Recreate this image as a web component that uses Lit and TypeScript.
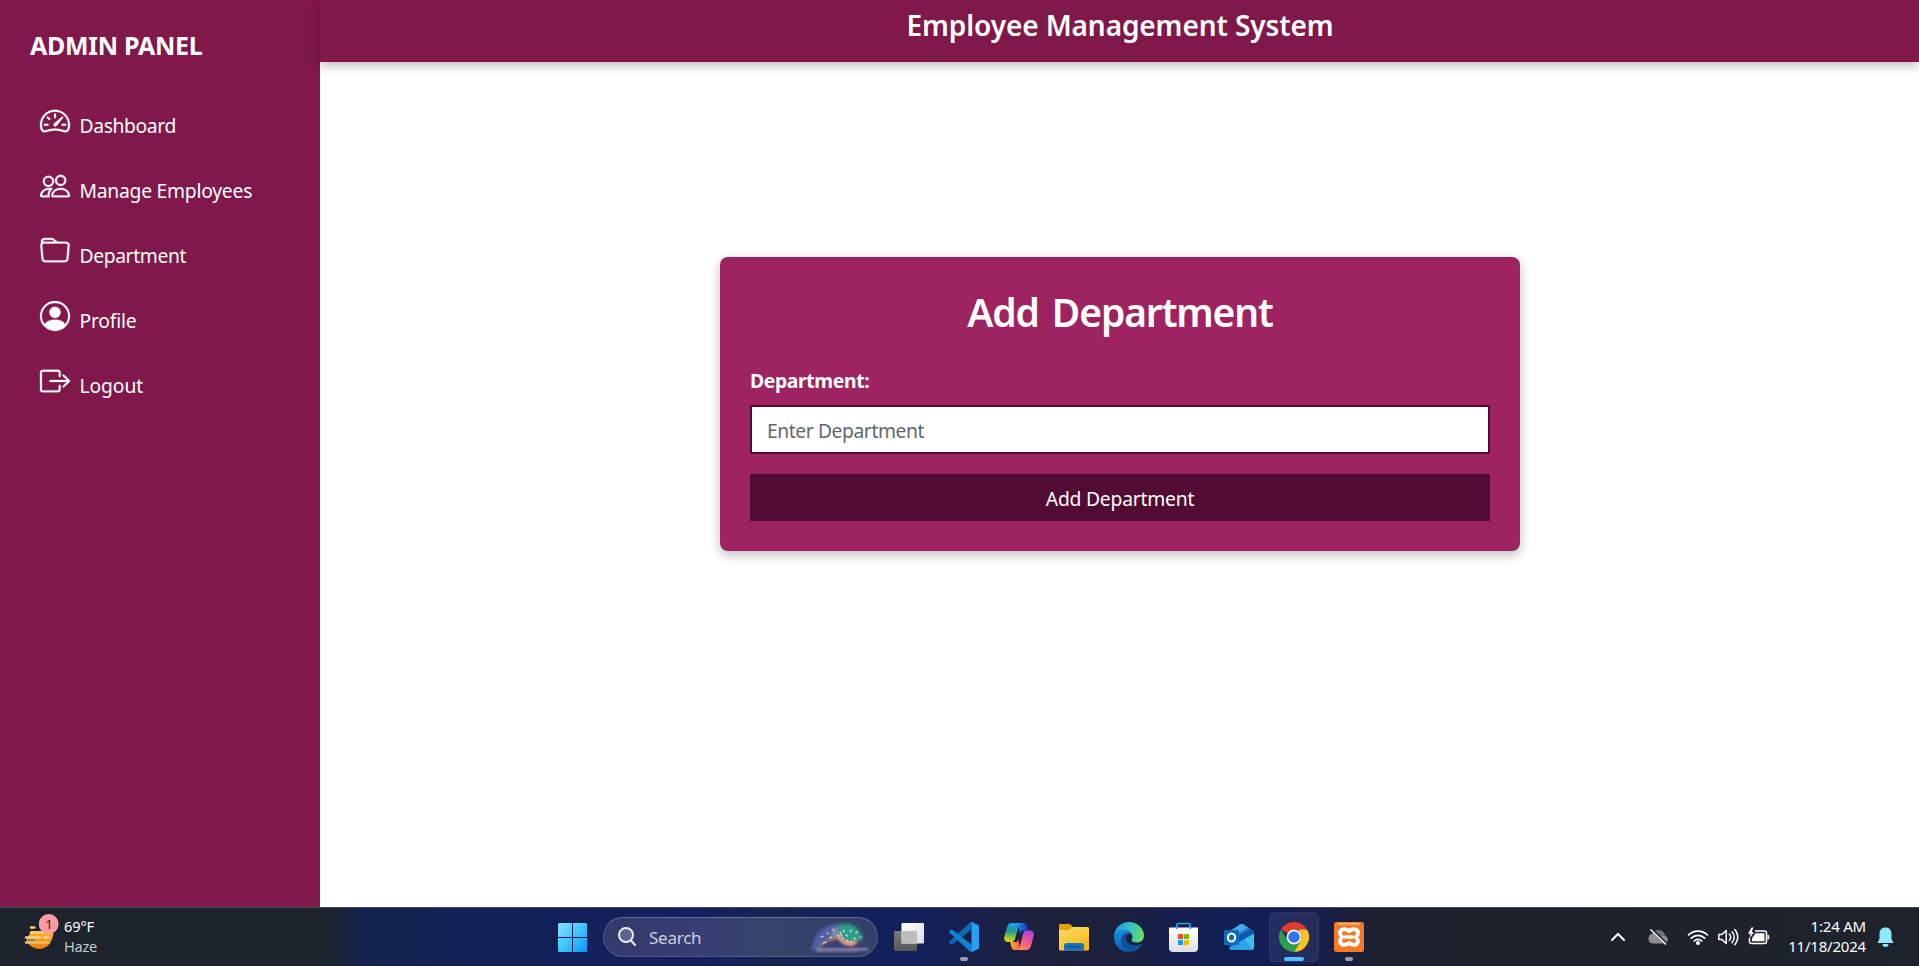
import { LitElement, html, svg, css } from "lit";
import { customElement } from "lit/decorators.js";

interface NavItem {
  label: string;
  tracking: number;
  paths: string[];
}

const NAV: NavItem[] = [
  {
    label: "Dashboard",
    tracking: -0.38,
    paths: [
      "M8 4a.5.5 0 0 1 .5.5V6a.5.5 0 0 1-1 0V4.5A.5.5 0 0 1 8 4M3.732 5.732a.5.5 0 0 1 .707 0l.915.914a.5.5 0 1 1-.708.708l-.914-.915a.5.5 0 0 1 0-.707M2 10a.5.5 0 0 1 .5-.5h1.586a.5.5 0 0 1 0 1H2.5A.5.5 0 0 1 2 10m9.5 0a.5.5 0 0 1 .5-.5h1.5a.5.5 0 0 1 0 1H12a.5.5 0 0 1-.5-.5m.754-4.246a.39.39 0 0 0-.527-.02L7.547 9.31a.91.91 0 1 0 1.302 1.258l3.434-4.297a.39.39 0 0 0-.029-.518z",
      "M0 10a8 8 0 1 1 15.547 2.661c-.442 1.253-1.845 1.602-2.932 1.25C11.309 13.488 9.475 13 8 13c-1.474 0-3.31.488-4.615.911-1.087.352-2.49.003-2.932-1.25A8 8 0 0 1 0 10m8-7a7 7 0 0 0-6.603 9.329c.203.575.923.876 1.68.63C4.397 12.533 6.358 12 8 12s3.604.532 4.923.96c.757.245 1.477-.056 1.68-.631A7 7 0 0 0 8 3",
    ],
  },
  {
    label: "Manage Employees",
    tracking: -0.24,
    paths: [
      "M15 14s1 0 1-1-1-4-5-4-5 3-5 4 1 1 1 1zm-7.978-1L7 12.996c.001-.264.167-1.03.76-1.72C8.312 10.629 9.282 10 11 10c1.717 0 2.687.63 3.24 1.276.593.69.758 1.457.76 1.72l-.008.002-.014.002zM11 7a2 2 0 1 0 0-4 2 2 0 0 0 0 4m3-2a3 3 0 1 1-6 0 3 3 0 0 1 6 0M6.936 9.28a6 6 0 0 0-1.23-.247A7 7 0 0 0 5 9c-4 0-5 3-5 4q0 1 1 1h4.216A2.24 2.24 0 0 1 5 13c0-1.01.377-2.042 1.09-2.904.243-.294.526-.569.846-.816M4.92 10A5.5 5.5 0 0 0 4 13H1c0-.26.164-1.03.76-1.724.545-.636 1.492-1.256 3.16-1.275ZM1.5 5.5a3 3 0 1 1 6 0 3 3 0 0 1-6 0m3-2a2 2 0 1 0 0 4 2 2 0 0 0 0-4",
    ],
  },
  {
    label: "Department",
    tracking: -0.38,
    paths: [
      "M.54 3.87.5 3a2 2 0 0 1 2-2h3.672a2 2 0 0 1 1.414.586l.828.828A2 2 0 0 0 9.828 3h3.982a2 2 0 0 1 1.992 2.181l-.637 7A2 2 0 0 1 13.174 14H2.826a2 2 0 0 1-1.991-1.819l-.637-7a2 2 0 0 1 .342-1.31zM2.19 4a1 1 0 0 0-.996 1.09l.637 7a1 1 0 0 0 .995.91h10.348a1 1 0 0 0 .995-.91l.637-7A1 1 0 0 0 13.81 4zm4.69-1.707A1 1 0 0 0 6.172 2H2.5a1 1 0 0 0-1 .981l.006.139q.323-.119.684-.12h5.396z",
    ],
  },
  {
    label: "Profile",
    tracking: -0.2,
    paths: [
      "M11 6a3 3 0 1 1-6 0 3 3 0 0 1 6 0",
      "M0 8a8 8 0 1 1 16 0A8 8 0 0 1 0 8m8-7a7 7 0 0 0-5.468 11.37C3.242 11.226 4.805 10 8 10s4.757 1.225 5.468 2.37A7 7 0 0 0 8 1",
    ],
  },
  {
    label: "Logout",
    tracking: -0.1,
    paths: [
      "M10 12.5a.5.5 0 0 1-.5.5h-8a.5.5 0 0 1-.5-.5v-9a.5.5 0 0 1 .5-.5h8a.5.5 0 0 1 .5.5v2a.5.5 0 0 0 1 0v-2A1.5 1.5 0 0 0 9.5 2h-8A1.5 1.5 0 0 0 0 3.5v9A1.5 1.5 0 0 0 1.5 14h8a1.5 1.5 0 0 0 1.5-1.5v-2a.5.5 0 0 0-1 0z",
      "M15.854 8.354a.5.5 0 0 0 0-.708l-3-3a.5.5 0 0 0-.708.708L14.293 7.5H5.5a.5.5 0 0 0 0 1h8.793l-2.147 2.146a.5.5 0 0 0 .708.708z",
    ],
  },
];

@customElement("side-bar")
class SideBar extends LitElement {
  static styles = css`
    :host {
      display: block;
      width: 320px;
      background: #80184a;
      color: #fff;
      box-sizing: border-box;
      padding: 29px 30px 0;
    }
    .brand {
      margin: 0 0 44px;
      font-size: 25px;
      line-height: 33px;
      font-weight: 700;
      letter-spacing: -0.3px;
      white-space: nowrap;
    }
    .menu {
      list-style: none;
      margin: 0;
      padding: 0 10px;
    }
    .item {
      display: flex;
      height: 65px;
      gap: 9.5px;
      font-size: 19.3px;
      line-height: 24px;
    }
    .item svg {
      width: 30px;
      height: 30px;
      flex: none;
      overflow: visible;
      fill: currentColor;
      stroke: currentColor;
      stroke-width: 0.15;
    }
    .label {
      padding-top: 8px;
      white-space: nowrap;
    }
  `;
  render() {
    return html`
      <h2 class="brand">ADMIN PANEL</h2>
      <ul class="menu">
        ${NAV.map(
          (n) => html`<li class="item">
            <svg viewBox="0 0 16 16" fill-rule="evenodd">${n.paths.map((d) => svg`<path d=${d} />`)}</svg>
            <span class="label" style="letter-spacing:${n.tracking}px">${n.label}</span>
          </li>`
        )}
      </ul>
    `;
  }
}

@customElement("department-form")
class DepartmentForm extends LitElement {
  static styles = css`
    :host {
      display: block;
      box-sizing: border-box;
      width: 800px;
      height: 294px;
      padding: 30px;
      border-radius: 8px;
      background: #9d2461;
      color: #fff;
      box-shadow: 0 4px 12px rgba(0, 0, 0, 0.25);
    }
    form {
      display: flex;
      flex-direction: column;
    }
    .title {
      margin: 1px 0 33px;
      text-align: center;
      font-size: 39px;
      line-height: 48px;
      font-weight: 600;
      letter-spacing: -1.15px;
      word-spacing: 4px;
    }
    .caption {
      font-size: 19.3px;
      line-height: 24px;
      font-weight: 700;
      letter-spacing: -0.34px;
      margin-bottom: 12px;
    }
    .field {
      box-sizing: border-box;
      height: 49px;
      margin: 0 0 20px;
      padding: 2px 14px 0 15px;
      border: 2px solid #520b32;
      border-radius: 0;
      background: #fff;
      font: inherit;
      font-size: 19.3px;
      letter-spacing: -0.42px;
      outline: none;
    }
    .field::placeholder {
      color: #62666b;
      opacity: 1;
    }
    .submit {
      height: 47px;
      padding: 2px 0 0;
      border: 0;
      background: #520b32;
      color: #fff;
      font: inherit;
      font-size: 19.3px;
      letter-spacing: -0.22px;
    }
  `;
  render() {
    return html`<form>
      <h1 class="title">Add Department</h1>
      <label class="caption" for="dep">Department:</label>
      <input class="field" id="dep" placeholder="Enter Department" />
      <button class="submit" type="button">Add Department</button>
    </form>`;
  }
}

const taskView = svg`<svg viewBox="0 0 30 30">
  <defs><linearGradient id="tv" x2="1" y2="1"><stop stop-color="#fff"/><stop offset="1" stop-color="#dcdcdf"/></linearGradient>
  <linearGradient id="tg" x2="0" y2="1"><stop stop-color="#7b7b7d"/><stop offset="1" stop-color="#585858"/></linearGradient></defs>
  <rect x="0" y="9" width="23" height="20" rx="1" fill="url(#tg)"/>
  <rect x="7.500" y="1" width="22.500" height="20.500" rx="1" fill="url(#tv)"/>
  <rect x="7.500" y="9" width="15.500" height="12.500" fill="#bdbdbf"/></svg>`;

const vscode = svg`<svg viewBox="0 0 30 30">
  <path d="M22.500 7.500 3.300 22.300a1.300 1.300 0 0 1-1.600 0L.5 21a1.300 1.300 0 0 1 0-1.800L20.800.800a3.700 3.700 0 0 1 1.700-.5z" fill="#0a6cb4"/>
  <path d="M22.500 22.500 3.300 7.700a1.300 1.300 0 0 0-1.600 0L.5 9a1.300 1.300 0 0 0 0 1.800L20.800 29.200a3.700 3.700 0 0 0 1.700.5z" fill="#0c83d0"/>
  <path d="M22 .2c.5-.2 1-.1 1.400.1l5.500 2.600c.7.300 1.100 1 1.100 1.700v20.800c0 .7-.4 1.400-1.100 1.700l-5.500 2.600c-.7.300-1.700.2-2.400-.5.900.4 1.500-.2 1.500-1.300V2.100C22.500.9 21.800.4 21 .8z" fill="#2a9ff0"/></svg>`;

const copilot = svg`<svg viewBox="0 0 30 30">
  <defs>
    <linearGradient id="c1" x1=".5" x2=".4" y2="1"><stop stop-color="#1f9cf0"/><stop offset=".45" stop-color="#1b9e93"/><stop offset=".75" stop-color="#8cc63a"/><stop offset="1" stop-color="#f5c60b"/></linearGradient>
    <linearGradient id="c2" x1=".7" x2=".2" y2="1"><stop stop-color="#a545e8"/><stop offset=".5" stop-color="#f0568b"/><stop offset="1" stop-color="#ff9350"/></linearGradient>
    <linearGradient id="c3" x2="1"><stop stop-color="#1a7fe0"/><stop offset="1" stop-color="#1639c8"/></linearGradient>
    <linearGradient id="c4" x2="1"><stop stop-color="#ffb02e"/><stop offset="1" stop-color="#ff5a4a"/></linearGradient>
  </defs>
  <path d="M14 1h5.500c2 0 3 1.200 3.500 3l1.200 4.500h-4.500c-2 0-3 1-3.500 3z" fill="url(#c3)"/>
  <path d="M16 28h-5c-2 0-3-1.200-3.500-3L6.200 20h5c2 0 2.800-1 3.300-3z" fill="url(#c4)"/>
  <path d="M7.500 1H18c-2 0-2.800 1.500-3.400 3.500L11 17c-.7 2.200-1.800 3-4 3H4c-3 0-4.500-2-3.700-5.500L3.300 4.500C4 2.200 5.300 1 7.500 1z" fill="url(#c1)"/>
  <path d="M22.500 28H12.500c2 0 2.800-1.500 3.400-3.500L19 12c.7-2.500 1.800-3.500 4-3.500h3c3 0 4.500 2 3.700 5.500l-3 10.500c-.7 2.300-2 3.500-4.200 3.500z" fill="url(#c2)"/></svg>`;

const explorer = svg`<svg viewBox="0 0 30 30">
  <defs><linearGradient id="fe" x2=".7" y2="1"><stop stop-color="#ffdc6e"/><stop offset="1" stop-color="#fdb913"/></linearGradient></defs>
  <path d="M0 3.500C0 2.500.6 2 1.500 2h8.500c.8 0 1.300.2 1.800.8L14 5v5H0z" fill="#e3a008"/>
  <path d="M0 8h9.500c1 0 1.500-.3 2-.8l1.300-1.400c.5-.5 1-.8 1.700-.8H28.500c1 0 1.500.6 1.500 1.500V27c0 1-.5 1.500-1.500 1.500H1.500C.5 28.500 0 28 0 27z" fill="url(#fe)"/>
  <path d="M5 28.500V23.500c0-1.600 1-2.500 2.500-2.500h15c1.500 0 2.500.9 2.500 2.500v5z" fill="#1573c4"/>
  <rect x="8" y="24" width="14" height="1.200" rx=".6" fill="#0d4f8f"/></svg>`;

const edge = svg`<svg viewBox="0 0 30 30">
  <defs>
    <linearGradient id="e1" x1="0" y1=".4" x2="1" y2=".6"><stop stop-color="#1b9de2"/><stop offset=".5" stop-color="#32c2c4"/><stop offset="1" stop-color="#69e05a"/></linearGradient>
    <linearGradient id="e2" x2=".3" y2="1"><stop stop-color="#1c8fdc"/><stop offset="1" stop-color="#0b62b8"/></linearGradient>
  </defs>
  <path d="M15 0c8.500 0 15 6.500 15 13.500 0 4.500-3.200 7-7 7-3 0-5.500-1-5.500-2.400 0-.8 1-1.400 1-3.400C18.500 11.500 15 8 10.500 8 5 8 1 11 0 15 0 6.500 6.500 0 15 0z" fill="url(#e1)"/>
  <path d="M0 15C.5 10.500 5 7.500 10 7.700c4.500.2 8.500 3.500 8.500 7 0-2-2-3.500-4.500-3.500-4 0-6.500 3.500-6.500 7.300C7.500 24.500 12 29.500 18 29.700 17 30 16 30 15 30 6.500 30 0 23.500 0 15z" fill="url(#e2)"/>
  <path d="M14 11.200C10 11.200 7.500 14.500 7.500 18.500c0 6 5 11.500 11 11.200 4-.8 7.500-3.500 9.300-7 .3-.6-.2-1-.8-.7-1.500.8-3.500 1.200-5.500 1.200-5.500 0-9.500-3-9.500-6.800 0-2 1-4 2.800-5.100z" fill="#10529d"/></svg>`;

const store = svg`<svg viewBox="0 0 30 30">
  <defs><linearGradient id="st" x2="0" y2="1"><stop stop-color="#fff"/><stop offset="1" stop-color="#dedee2"/></linearGradient></defs>
  <path d="M7.800 6.500V3.200c0-1 .6-1.700 1.700-1.700h10c1.100 0 1.700.7 1.700 1.700v3.300" fill="none" stroke="#28a8ea" stroke-width="1.700"/>
  <path d="M0 5.500h29V26c0 2.500-1.500 4-4 4H4c-2.500 0-4-1.500-4-4z" fill="url(#st)"/>
  <path d="M7.800 5v2M21.200 5v2" stroke="#28a8ea" stroke-width="1.700"/>
  <path d="M9 12h5v5H9z" fill="#f04f23"/><path d="M15 12h5v5h-5z" fill="#7fb900"/>
  <path d="M9 18h5v5H9z" fill="#03a4ee"/><path d="M15 18h5v5h-5z" fill="#fdb800"/></svg>`;

const outlook = svg`<svg viewBox="0 0 30 30">
  <path d="M5 9.500 16.500 2.300c.8-.5 1.700-.5 2.500 0L30 9.500V14L10 25z" fill="#1e78cc"/>
  <path d="m5 9.500 11.500-7.200c.8-.5 1.700-.5 2.500 0l5 3.200L12 13H5z" fill="#45a9ee"/>
  <path d="m12 15 15-7.800 3 2.300v2.700L16 20.500z" fill="#0f55ab"/>
  <path d="M5 12h7v13H5z" fill="#1062b4"/>
  <path d="M30 11.500v14c0 1.700-1 2.500-2.500 2.500H8C6.500 28 5.500 27 5.500 26L14 21z" fill="#38c3ef"/>
  <path d="m15 21 6-3.500 8 10c-.4.300-1 .5-1.500.5H8C6.500 28 5.500 27 5.500 26z" fill="#2ba4e4"/>
  <rect x="0" y="8" width="15" height="15" rx="1.500" fill="#0f6cbd"/>
  <ellipse cx="7.500" cy="15.500" rx="3.600" ry="4" fill="none" stroke="#fff" stroke-width="2.100"/></svg>`;

const chrome = svg`<svg viewBox="0 0 30 30">
  <path d="M15 0A15 15 0 0 1 28 7.500H15a7.500 7.500 0 0 0-6.500 3.750L2 7.500A15 15 0 0 1 15 0z" fill="#e33b2e"/>
  <path d="M28 7.500A15 15 0 0 1 15 30l6.500-11.250A7.500 7.500 0 0 0 21.500 11.250L19 7.500z" fill="#fcc31e"/>
  <path d="M2 7.500A15 15 0 0 0 15 30l6.500-11.250a7.500 7.500 0 0 1-13 0z" fill="#2b9d4b"/>
  <circle cx="15" cy="15" r="7.500" fill="#fff"/><circle cx="15" cy="15" r="5.800" fill="#2f76e8"/></svg>`;

const xampp = svg`<svg viewBox="0 0 30 30">
  <rect width="30" height="30" rx="2.500" fill="#f37a22"/>
  <path d="M4 1.800h22" stroke="#fbb98a" stroke-width="1.500"/>
  <g fill="none" stroke="#fff" stroke-width="3.900" stroke-linejoin="round">
    <path d="M15 9.300C13.500 7.300 11.500 7.200 10 7.200 7.500 7.200 6 8.800 6 10.800c0 2 .8 3 2 4.200-1.200 1.200-2 2.200-2 4.200s1.500 3.600 4 3.600c1.500 0 3.500-.1 5-2.100 1.500 2 3.500 2.100 5 2.100 2.500 0 4-1.600 4-3.600s-.8-3-2-4.200c1.200-1.200 2-2.200 2-4.200s-1.500-3.600-4-3.600c-1.500 0-3.500.1-5 2.100z"/>
    <path d="M11.500 15h7" stroke-width="3.600" stroke-linecap="round"/>
  </g></svg>`;

const PINNED = [
  { icon: taskView, mark: "" },
  { icon: vscode, mark: "dot" },
  { icon: copilot, mark: "" },
  { icon: explorer, mark: "" },
  { icon: edge, mark: "" },
  { icon: store, mark: "" },
  { icon: outlook, mark: "" },
  { icon: chrome, mark: "bar" },
  { icon: xampp, mark: "dot" },
];

@customElement("task-bar")
class TaskBar extends LitElement {
  static styles = css`
    :host {
      display: grid;
      grid-template-columns: 558px 29px 291px auto 1fr;
      box-sizing: border-box;
      height: 59px;
      border-top: 1px solid #454a52;
      border-bottom: 1px solid #161a26;
      color: #fff;
      background: linear-gradient(
        90deg,
        #1d232c 0,
        #1d232c 318px,
        #192433 335px,
        #142450 365px,
        #12205a 560px,
        #14205b 640px,
        #151e60 690px,
        #14235a 725px,
        #152552 780px,
        #11205a 860px,
        #13205c 925px,
        #1a2048 985px,
        #1c203a 1050px,
        #1b203e 1120px,
        #141f50 1180px,
        #131e57 1290px,
        #191f40 1340px,
        #1c212d 1385px,
        #1d222c 100%
      );
    }
    .weather {
      display: flex;
      padding: 8px 0 0 24px;
      gap: 5px;
      font-size: 14.6px;
      line-height: 20px;
    }
    .weather svg {
      width: 35px;
      height: 36px;
      margin-top: -2px;
      flex: none;
    }
    .temp {
      letter-spacing: -0.15px;
    }
    .sky {
      color: #c6c9cd;
      letter-spacing: -0.3px;
    }
    .badge {
      font-size: 13px;
    }
    .start {
      width: 29px;
      height: 29px;
      margin-top: 15px;
    }
    .search {
      box-sizing: border-box;
      display: flex;
      align-items: center;
      width: 275px;
      height: 40px;
      margin: 9px 0 0 16px;
      padding: 0 4px 0 13px;
      border: 1px solid rgba(255, 255, 255, 0.15);
      border-top-color: rgba(255, 255, 255, 0.24);
      border-radius: 20px;
      background: linear-gradient(90deg, #333a6c, #383d72 35%, #35436a 60%, #33416a);
      color: #cbcedf;
      font-size: 17px;
      line-height: 24px;
    }
    .search .lens {
      width: 20px;
      height: 20px;
      margin-right: 12px;
    }
    .search .query {
      flex: 1;
      padding-top: 1px;
      letter-spacing: -0.25px;
    }
    .search .art {
      width: 62px;
      height: 32px;
    }
    .pins {
      display: flex;
      margin-left: 3px;
    }
    .pin {
      box-sizing: border-box;
      position: relative;
      width: 50px;
      height: 50px;
      margin: 4px 2.5px 0;
      padding: 9px 9px 0;
      border: 1px solid transparent;
      border-radius: 6px;
    }
    .pin.bar {
      background: rgba(255, 255, 255, 0.07);
      border-color: rgba(255, 255, 255, 0.05);
    }
    .pin svg {
      display: block;
      width: 30px;
      height: 30px;
    }
    .pin.dot::after,
    .pin.bar::after {
      content: "";
      position: absolute;
      bottom: 0;
      left: 20px;
      width: 8px;
      height: 4px;
      border-radius: 2px;
      background: #9b9db0;
    }
    .pin.bar::after {
      left: 14px;
      width: 20px;
      background: #4cc2ff;
    }
    .tray {
      display: flex;
      justify-content: flex-end;
      padding-right: 25px;
    }
    .tray svg {
      flex: none;
      height: 22px;
      margin-top: 18px;
    }
    .tray .cloud {
      margin-right: 5px;
    }
    .clock {
      width: 88px;
      margin: 8px 11px 0 5px;
      text-align: right;
      font-size: 15px;
      line-height: 20px;
      letter-spacing: -0.2px;
      white-space: nowrap;
    }
  `;
  render() {
    return html`
      <div class="weather">
        <svg viewBox="0 0 35 36">
          <defs><linearGradient id="sun" x2="0" y2="1"><stop stop-color="#fcb929" /><stop offset="1" stop-color="#f07a14" /></linearGradient></defs>
          <path d="M7 17h22.500c.2 10-6 18-14 18C9.500 35 4.500 31.500 2.500 26z" fill="url(#sun)" />
          <path d="M4 25.800h7" stroke="#8d7c4c" stroke-width="2" />
          <g stroke-linecap="round" stroke-width="2.400">
            <path d="M7 13.500h3.500M7 18.500h19" stroke="#f5cf70" />
            <path d="M2 23.500h14M20.500 23.500h4" stroke="#ecd48c" />
            <path d="M2 28.500h23" stroke="#e8ba68" />
          </g>
          <circle cx="24.700" cy="10" r="10" fill="#ff99a4" />
          <text class="badge" x="25" y="14.500" text-anchor="middle" fill="#222">1</text>
        </svg>
        <div>
          <div class="temp">69°F</div>
          <div class="sky">Haze</div>
        </div>
      </div>
      <svg class="start" viewBox="0 0 29 29">
        <defs><linearGradient id="win" gradientUnits="userSpaceOnUse" x2="29" y2="29"><stop stop-color="#8ce0fe" /><stop offset=".5" stop-color="#3fc4fc" /><stop offset="1" stop-color="#0a93f5" /></linearGradient></defs>
        <path fill="url(#win)" d="M1 0h13v14H0V1zM15 0h13l1 1v13H15zM0 15h14v14H1l-1-1zM15 15h14v13l-1 1H15z" />
      </svg>
      <div class="search">
        <svg class="lens" viewBox="0 0 20 20" fill="#5c648c" stroke="#e8eaf2" stroke-width="2" stroke-linecap="round">
          <circle cx="9" cy="8" r="7" /><path d="m14 13.500 4 4.500" />
        </svg>
        <span class="query">Search</span>
        <svg class="art" viewBox="0 0 62 32">
          <defs>
            <filter id="b1" x="-20%" y="-20%" width="140%" height="140%"><feGaussianBlur stdDeviation="1.800" /></filter>
            <filter id="b2" x="-20%" y="-50%" width="140%" height="200%"><feGaussianBlur stdDeviation=".8" /></filter>
          </defs>
          <g filter="url(#b1)">
            <path d="M1 29C1 15 11 4 27 3l6 14-24 13z" fill="#5060a8" />
            <path d="M27 4c13-4 23 3 25 14l-9 4-12-4z" fill="#2f9e88" />
            <path d="M26 5c-5 5-7 10-5 14l10 2z" fill="#7d8fb0" />
            <path d="M26 14c5 7 10 9 20 6l-4 6-14-2z" fill="#b88477" />
          </g>
          <g filter="url(#b2)">
            <path d="M7 28c7-8 12-10 19-10l9 7c5 2 9 1 14-3l9-4v10l-51 2z" fill="#3a4373" />
            <path d="M7 28c5-7 11-11 19-13l2 3c-7 0-12 2-17 7z" fill="#b58450" />
            <path d="M27 13c4 6 9 9 20 7-5 6-14 5-20-3z" fill="#e0a58c" />
            <path d="M6 28.500h51" stroke="#a79ac6" stroke-width="1.300" />
            <path d="M5 30.500h42" stroke="#6f6799" stroke-width="1.300" />
          </g>
          <g stroke="#fff3d8" stroke-width="1.200" stroke-linecap="round" opacity=".85">
            <path d="m10 16 2-.7M16 12l1 .7M22 8l.6 1.500M12 22l3-.8M19 17l1-1M29 11l1 2M33 9l-.5 2M35 14l1.500 1M40 9l-.7 2M46 11l-1 1M50 16h-1M43 17l1 1M37 20l-1-1M32 17l.5 1M27 14l1 1M40 21v-1M30 14l1 1" />
          </g>
        </svg>
      </div>
      <div class="pins">${PINNED.map((p) => html`<div class="pin ${p.mark}">${p.icon}</div>`)}</div>
      <div class="tray">
        <svg width="40" viewBox="0 0 40 22"><path d="m14 14 6-6 6 6" fill="none" stroke="#fff" stroke-width="2" stroke-linecap="round" /></svg>
        <svg class="cloud" width="40" viewBox="0 0 40 22">
          <path d="M15 17.500a5 5 0 0 1-.8-9.800A7 7 0 0 1 27 9.500a4.200 4.200 0 0 1-.5 8z" fill="#8a8d92" />
          <path d="M17 5.300a6 6 0 0 1 9 4.500l-4 1z" fill="#6a6d73" />
          <path d="m13.500 3.500 15.500 15" stroke="#1d222c" stroke-width="3" /><path d="M12.500 3.500 28 18.500" stroke="#fff" stroke-width="1.400" />
        </svg>
        <svg width="30" viewBox="0 0 30 22" fill="none" stroke="#fff" stroke-width="1.700" stroke-linecap="round">
          <path d="M5.500 9a13.400 13.400 0 0 1 19 0M8.300 12.200a9.500 9.500 0 0 1 13.400 0M11.200 15a5.400 5.400 0 0 1 7.600 0" /><circle cx="15" cy="17" r="1.200" fill="#fff" />
        </svg>
        <svg width="30" viewBox="0 0 30 22" fill="none" stroke="#fff" stroke-width="1.500" stroke-linecap="round" stroke-linejoin="round">
          <path d="M5.800 8.500h3l4.400-4v13l-4.400-4h-3zM16.300 8a4.500 4.500 0 0 1 0 6.500M19 5.700a8 8 0 0 1 0 11M21.700 3.500a11 11 0 0 1 0 15.200" />
        </svg>
        <svg width="30" viewBox="0 0 30 22">
          <path d="M12 5h9.500c1 0 2 .8 2 2v8.500c0 1.200-1 2-2 2H8.500c-1.200 0-2-.8-2-2V12" fill="none" stroke="#fff" stroke-width="1.500" />
          <path d="M12.500 7.200h9v8H9v-3z" fill="#fff" /><path d="M24.500 9.500h1.200v3.500h-1.200" stroke="#fff" stroke-width="1" fill="#fff" />
          <path d="M8.500 1.500 5 7.800h2.500L6.500 12 11 6.300H8.500l2-4.800z" fill="#fff" />
        </svg>
        <div class="clock"><div>1:24 AM</div><div>11/18/2024</div></div>
        <svg width="17" viewBox="0 0 17 22">
          <path d="M8.500 1.500c3.800 0 6 2.700 6 6v5.300L16.500 17H.5l2-4.200V7.500c0-3.300 2.200-6 6-6zM5.500 18h6a3 3 0 0 1-6 0z" fill="#8ee8fb" />
        </svg>
      </div>
    `;
  }
}

@customElement("app-root")
class AppRoot extends LitElement {
  static styles = css`
    :host {
      display: grid;
      grid-template-rows: 1fr 59px;
      height: 100vh;
      overflow: hidden;
      background: #fff;
      font-family: "Noto Sans", "Open Sans", sans-serif;
    }
    .page {
      display: grid;
      grid-template-columns: 320px 1fr;
      grid-template-rows: 62px 1fr;
      min-height: 0;
      overflow: hidden;
    }
    side-bar {
      grid-row: 1 / 3;
    }
    .top {
      z-index: 1;
      box-sizing: border-box;
      margin: 0;
      padding: 5px 0 0 1px;
      text-align: center;
      background: #80184a;
      color: #fff;
      font-size: 28px;
      line-height: 40px;
      font-weight: 600;
      letter-spacing: -0.1px;
      box-shadow: 0 4px 10px rgba(0, 0, 0, 0.25);
    }
    .content {
      display: flex;
      justify-content: center;
      align-items: flex-start;
      padding: 195px 0 0 1px;
    }
  `;
  render() {
    return html`
      <div class="page">
        <side-bar></side-bar>
        <h1 class="top">Employee Management System</h1>
        <main class="content"><department-form></department-form></main>
      </div>
      <task-bar></task-bar>
    `;
  }
}
